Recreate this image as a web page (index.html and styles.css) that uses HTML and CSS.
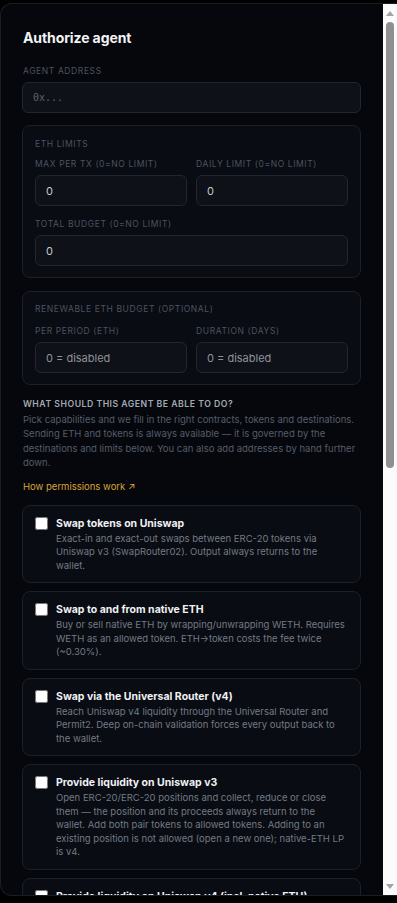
FILE: index.html
```html
<!DOCTYPE html>
<html lang="en">
<head>
  <meta charset="UTF-8">
  <title>Authorize agent</title>
  <link rel="stylesheet" href="styles.css">
</head>
<body>

  <div class="modal">
    <div class="content">
      <h2 class="title">Authorize agent</h2>

      <label class="label" for="agentAddress">Agent address</label>
      <input class="input mono" id="agentAddress" type="text" placeholder="0x...">

      <div class="group">
        <div class="group-title">ETH limits</div>
        <div class="row">
          <div class="field">
            <label class="label">Max per tx (0=no limit)</label>
            <input class="input" type="text" value="0">
          </div>
          <div class="field">
            <label class="label">Daily limit (0=no limit)</label>
            <input class="input" type="text" value="0">
          </div>
        </div>
        <div class="field">
          <label class="label">Total budget (0=no limit)</label>
          <input class="input" type="text" value="0">
        </div>
      </div>

      <div class="group renew">
        <div class="group-title">Renewable ETH budget (optional)</div>
        <div class="row">
          <div class="field">
            <label class="label">Per period (ETH)</label>
            <input class="input" type="text" placeholder="0 = disabled">
          </div>
          <div class="field">
            <label class="label">Duration (days)</label>
            <input class="input" type="text" placeholder="0 = disabled">
          </div>
        </div>
      </div>

      <div class="section-title">What should this agent be able to do?</div>
      <p class="hint">Pick capabilities and we fill in the right contracts, tokens and destinations. Sending ETH and tokens is always available — it is governed by the destinations and limits below. You can also add addresses by hand further down.</p>
      <a class="link" href="#">How permissions work ↗</a>

      <div class="caps">
        <label class="cap">
          <input type="checkbox">
          <div class="cap-body">
            <div class="cap-title">Swap tokens on Uniswap</div>
            <div class="cap-desc">Exact-in and exact-out swaps between ERC-20 tokens via Uniswap v3 (SwapRouter02). Output always returns to the wallet.</div>
          </div>
        </label>
        <label class="cap">
          <input type="checkbox">
          <div class="cap-body">
            <div class="cap-title">Swap to and from native ETH</div>
            <div class="cap-desc">Buy or sell native ETH by wrapping/unwrapping WETH. Requires WETH as an allowed token. ETH→token costs the fee twice (~0.30%).</div>
          </div>
        </label>
        <label class="cap">
          <input type="checkbox">
          <div class="cap-body">
            <div class="cap-title">Swap via the Universal Router (v4)</div>
            <div class="cap-desc">Reach Uniswap v4 liquidity through the Universal Router and Permit2. Deep on-chain validation forces every output back to the wallet.</div>
          </div>
        </label>
        <label class="cap">
          <input type="checkbox">
          <div class="cap-body">
            <div class="cap-title">Provide liquidity on Uniswap v3</div>
            <div class="cap-desc">Open ERC-20/ERC-20 positions and collect, reduce or close them — the position and its proceeds always return to the wallet. Add both pair tokens to allowed tokens. Adding to an existing position is not allowed (open a new one); native-ETH LP is v4.</div>
          </div>
        </label>
        <label class="cap">
          <input type="checkbox">
          <div class="cap-body">
            <div class="cap-title">Provide liquidity on Uniswap v4 (incl. native ETH)</div>
            <div class="cap-desc">Open, collect, reduce or close v4 positions, including pools paired with native ETH. Proceeds always return to the wallet.</div>
          </div>
        </label>
      </div>
    </div>

    <!-- scrollbar drawn by hand, the headless browser hides the native one -->
    <div class="scrollbar">
      <div class="sb-arrow up"></div>
      <div class="sb-thumb"></div>
      <div class="sb-arrow down"></div>
    </div>
  </div>

</body>
</html>
```

FILE: styles.css
```css
:root {
  --bg: #05070c;
  --panel: #090c12;
  --input-bg: #0e1117;
  --border: #1c2028;
  --label: #4b5361;
  --text: #e6e8ec;
  --accent: #d9a437;
}

html, body {
  margin: 0;
  background: #000;
  overflow: hidden;
}

body {
  padding-top: 3px;
  font-family: Inter, 'Noto Sans', sans-serif;
  color: var(--text);
}

.modal {
  box-sizing: border-box;
  display: flex;
  height: 893px;
  background: var(--bg);
  border: 1px solid #1a1d24;
  border-right: none;
  border-radius: 12px 0 0 12px;
  overflow: hidden;
}

.content {
  flex: 1;
  min-width: 0;
  overflow: hidden;
  padding: 25px 22px 0 21px;
}

.title {
  margin: 0 0 20px 1px;
  font-size: 14px;
  line-height: 17px;
  font-weight: 700;
  letter-spacing: -0.1px;
  color: #f2f3f5;
}

.label {
  display: block;
  font-size: 8.5px;
  line-height: 10px;
  letter-spacing: 0.6px;
  text-transform: uppercase;
  color: var(--label);
  margin: 0 0 6px 1px;
}

.input {
  display: block;
  box-sizing: border-box;
  width: 100%;
  height: 31px;
  padding: 0 10px;
  background: var(--input-bg);
  border: 1px solid #22262e;
  border-radius: 6px;
  color: #c4c8cf;
  font-family: Inter, sans-serif;
  font-size: 11px;
  outline: none;
}

.input::placeholder {
  color: #8e939b;
}

.mono {
  font-family: 'DejaVu Sans Mono', monospace;
  font-size: 10px;
}

.mono::placeholder {
  color: #5d636d;
}

.group {
  margin-top: 12px;
  border: 1px solid var(--border);
  border-radius: 8px;
  background: var(--panel);
  padding: 13px 12px 11px;
}

.group .label {
  margin-left: 0;
}

.group-title {
  font-size: 8.5px;
  line-height: 10px;
  letter-spacing: 0.6px;
  text-transform: uppercase;
  color: var(--label);
  margin-bottom: 10px;
}

.renew {
  margin-top: 13px;
  padding-top: 12px;
}

.renew .group-title {
  margin-bottom: 12px;
}

.row {
  display: grid;
  grid-template-columns: 1fr 1fr;
  gap: 9px;
}

.row + .field {
  margin-top: 13px;
}

.section-title {
  margin: 14px 0 0 1px;
  font-size: 8.7px;
  line-height: 10px;
  font-weight: 600;
  letter-spacing: 0.5px;
  text-transform: uppercase;
  color: #a3a9b3;
}

.hint {
  margin: 4px 0 0 1px;
  font-size: 9.5px;
  line-height: 14.4px;
  color: #555d6a;
}

.link {
  display: block;
  width: max-content;
  margin: 10px 0 0 1px;
  font-size: 9.5px;
  line-height: 12px;
  color: var(--accent);
  text-decoration: none;
}

.caps {
  margin-top: 12px;
  display: flex;
  flex-direction: column;
  gap: 8px;
}

.cap {
  display: flex;
  gap: 8px;
  align-items: flex-start;
  border: 1px solid var(--border);
  border-radius: 8px;
  background: var(--panel);
  padding: 11px 14px 10px 12px;
  cursor: pointer;
}

.cap input {
  flex: none;
  width: 13px;
  height: 13px;
  margin: 0;
}

.cap-title {
  font-size: 10.5px;
  font-weight: 700;
  color: #f0f1f4;
  line-height: 13px;
}

.cap-desc {
  margin-top: 2px;
  font-size: 9.5px;
  line-height: 13.5px;
  color: #737a85;
}

.scrollbar {
  flex: none;
  width: 14px;
  display: flex;
  flex-direction: column;
  align-items: center;
  background: #fbfbfb;
}

.sb-arrow {
  width: 0;
  height: 0;
  border-left: 4px solid transparent;
  border-right: 4px solid transparent;
}

.sb-arrow.up {
  margin-top: 7px;
  border-bottom: 5px solid #a3a3a3;
}

.sb-arrow.down {
  margin: auto 0 6px;
  border-top: 5px solid #a3a3a3;
}

.sb-thumb {
  width: 8px;
  height: 446px;
  margin-top: 6px;
  border-radius: 4px;
  background: #8f8f8f;
}
```
